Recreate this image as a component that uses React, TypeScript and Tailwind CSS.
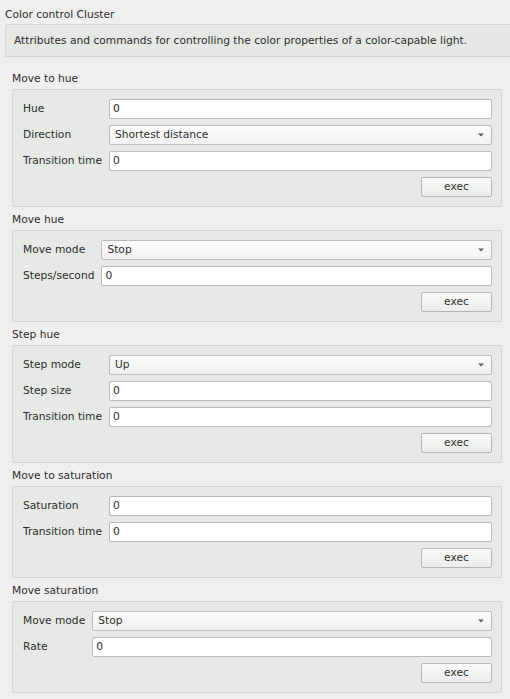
type Field = { label: string; kind: "input" | "combo"; value: string };

type Section = { title: string; fields: Field[] };

const sections: Section[] = [
  {
    title: "Move to hue",
    fields: [
      { label: "Hue", kind: "input", value: "0" },
      { label: "Direction", kind: "combo", value: "Shortest distance" },
      { label: "Transition time", kind: "input", value: "0" },
    ],
  },
  {
    title: "Move hue",
    fields: [
      { label: "Move mode", kind: "combo", value: "Stop" },
      { label: "Steps/second", kind: "input", value: "0" },
    ],
  },
  {
    title: "Step hue",
    fields: [
      { label: "Step mode", kind: "combo", value: "Up" },
      { label: "Step size", kind: "input", value: "0" },
      { label: "Transition time", kind: "input", value: "0" },
    ],
  },
  {
    title: "Move to saturation",
    fields: [
      { label: "Saturation", kind: "input", value: "0" },
      { label: "Transition time", kind: "input", value: "0" },
    ],
  },
  {
    title: "Move saturation",
    fields: [
      { label: "Move mode", kind: "combo", value: "Stop" },
      { label: "Rate", kind: "input", value: "0" },
    ],
  },
];

function TextInput({ value }: { value: string }) {
  return (
    <div className="h-[20px] bg-white border border-[#b9b9b9] rounded-[2px] flex items-center pl-[3px] leading-none">
      {value}
    </div>
  );
}

function Combo({ value }: { value: string }) {
  return (
    <div className="h-[20px] border border-[#bcbcbc] rounded-[2px] flex items-center pl-[5px] pr-[7px] leading-none bg-gradient-to-b from-[#fdfdfd] to-[#f1f1f1]">
      <span className="flex-1">{value}</span>
      <svg width="6" height="4" viewBox="0 0 6 4">
        <path d="M0 0.5h6L3 3.5z" fill="#606060" />
      </svg>
    </div>
  );
}

function Group({ section }: { section: Section }) {
  return (
    <div className="flex flex-col">
      <div className="h-[13px] leading-[13px] pl-[1px]">{section.title}</div>
      <div className="mt-[4px] ml-[1px] mr-[8px] bg-[#e6e9e6] border border-[#d2d5d2] rounded-[2px] p-[9px]">
        <div className="grid grid-cols-[auto_1fr] gap-x-[7px] gap-y-[6px] items-center">
          {section.fields.map((f, i) => (
            <div key={i} className="contents">
              <div className="pl-[1px] whitespace-nowrap">{f.label}</div>
              {f.kind === "input" ? <TextInput value={f.value} /> : <Combo value={f.value} />}
            </div>
          ))}
        </div>
        <div className="flex justify-end mt-[6px]">
          <button className="w-[71px] h-[20px] border border-[#b6b6b6] rounded-[2px] bg-gradient-to-b from-[#fbfbfb] to-[#ebebeb] leading-none text-[#303030]">
            exec
          </button>
        </div>
      </div>
    </div>
  );
}

export default function App() {
  return (
    <div
      className="w-[510px] h-[699px] bg-[#efefef] text-[#2c2c2c] text-[10.67px] overflow-hidden"
      style={{ fontFamily: '"DejaVu Sans", sans-serif' }}
    >
      <div className="pt-[8px] pl-[5px] h-[13px] leading-[13px] box-content">Color control Cluster</div>
      <div className="mt-[3px] ml-[5px] -mr-[2px] h-[33px] bg-[#e5e8e5] border border-[#d3d6d3] rounded-[2px] flex items-center pl-[8px]">
        Attributes and commands for controlling the color properties of a color-capable light.
      </div>
      <div className="pl-[11px] pt-[15px] flex flex-col gap-[6px]">
        {sections.map((s, i) => (
          <Group key={i} section={s} />
        ))}
      </div>
    </div>
  );
}
